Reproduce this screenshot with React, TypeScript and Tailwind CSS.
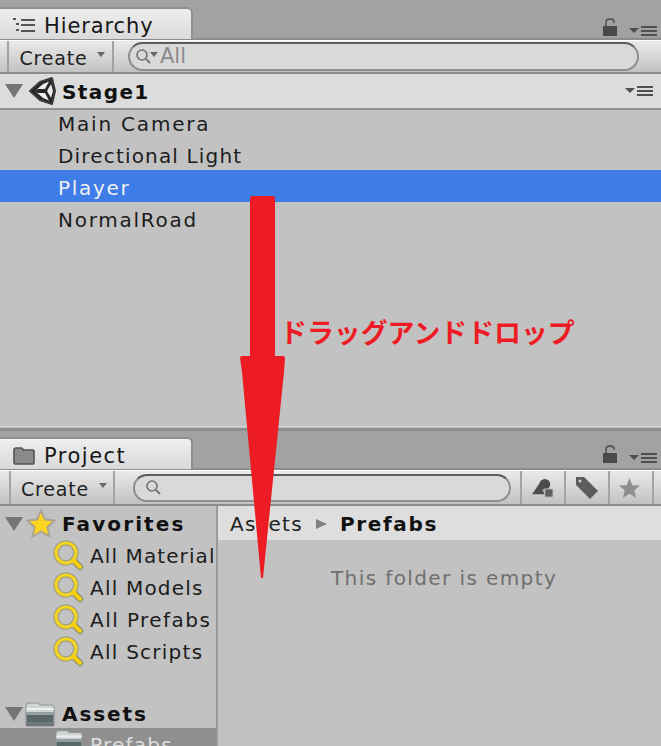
import React from "react";

const font = { fontFamily: '"DejaVu Sans", sans-serif' };

function Lock() {
  return (
    <svg width="14" height="18" viewBox="0 0 14 18">
      <rect x="0" y="8" width="14" height="10" fill="#4a4a4a" />
      <path d="M3 8V4Q3 1 7 1Q11 1 11 3.500V5" fill="none" stroke="#5a5a5a" strokeWidth="1.800" />
    </svg>
  );
}

function Menu() {
  return (
    <svg width="28" height="10" viewBox="0 0 28 10">
      <path d="M0 2H10L5 7Z" fill="#4f4f4f" />
      <rect x="12" y="0" width="16" height="2" fill="#4f4f4f" />
      <rect x="12" y="4" width="16" height="2" fill="#4f4f4f" />
      <rect x="12" y="8" width="16" height="2" fill="#4f4f4f" />
    </svg>
  );
}

function Expand({ className = "" }: { className?: string }) {
  return (
    <svg width="18" height="14" viewBox="0 0 18 14" className={className}>
      <path d="M0 0H18L9 14Z" fill="#757575" />
    </svg>
  );
}

function Magnifier() {
  return (
    <svg width="32" height="32" viewBox="0 0 32 32" className="shrink-0">
      <path d="M20 20L27 27" stroke="#8a8a7a" strokeWidth="6.500" strokeLinecap="round" />
      <circle cx="13" cy="13" r="10" fill="none" stroke="#a09e8a" strokeWidth="5.500" />
      <circle cx="13" cy="13" r="10" fill="none" stroke="#f2d422" strokeWidth="3.200" />
      <path d="M20 20L27 27" stroke="#f5cf10" strokeWidth="4" strokeLinecap="round" />
    </svg>
  );
}

function Folder({ w = 30 }: { w?: number }) {
  return (
    <svg width={w} height="26" viewBox="0 0 30 26" className="shrink-0">
      <path d="M1 5Q1 2 4 2H12Q14 2 15 4H27Q29 4 29 6V24Q29 25 28 25H2Q1 25 1 24Z" fill="#cfd4d4" stroke="#8d9292" />
      <rect x="1.500" y="7" width="27" height="2" fill="#eeeeee" />
      <rect x="1.500" y="11" width="27" height="14" fill="#5b686a" />
      <rect x="1.500" y="11" width="27" height="3" fill="#98a1a2" />
      <rect x="1.500" y="21" width="27" height="4" fill="#6c787a" />
    </svg>
  );
}

function UnityLogo() {
  return (
    <svg width="30" height="30" viewBox="0 0 30 30">
      <path d="M2 15L12 6L24 2L27 15L24 28L12 24Z" fill="#262626" stroke="#3a3a3a" strokeWidth="2" strokeLinejoin="round" />
      <path d="M7 15L15 8L21 5.500L17 13H10Z" fill="#ececec" />
      <path d="M7 15L15 22L21 24.500L17 17H10Z" fill="#ececec" />
      <path d="M19 15L23 8L25 15L23 22Z" fill="#ececec" />
    </svg>
  );
}

function HierarchyIcon() {
  return (
    <svg width="22" height="16" viewBox="0 0 22 16">
      <rect x="0" y="0" width="3" height="2" fill="#555" />
      <rect x="3" y="5" width="3" height="2" fill="#555" />
      <rect x="3" y="11" width="3" height="2" fill="#555" />
      <rect x="8" y="1" width="14" height="2" fill="#555" />
      <rect x="8" y="6" width="14" height="2" fill="#555" />
      <rect x="8" y="12" width="14" height="2" fill="#555" />
    </svg>
  );
}

function ProjectIcon() {
  return (
    <svg width="22" height="18" viewBox="0 0 22 18">
      <path d="M1 3Q1 1 3 1H8Q10 1 10 3H20Q21 3 21 4V16Q21 17 20 17H2Q1 17 1 16Z" fill="#8a8a8a" stroke="#555555" strokeWidth="1.600" />
    </svg>
  );
}

function SearchGlass({ dropdown }: { dropdown?: boolean }) {
  return (
    <svg width="28" height="18" viewBox="0 0 28 18" className="shrink-0">
      <circle cx="7" cy="7" r="5" fill="none" stroke="#747474" strokeWidth="1.600" />
      <path d="M11 11L15 15" stroke="#747474" strokeWidth="2" />
      {dropdown && <path d="M15 4H23L19 9Z" fill="#666" />}
    </svg>
  );
}

function Create({ w }: { w: string }) {
  return (
    <div className={`${w} flex h-full shrink-0 items-center justify-center gap-[10px] border-x-2 border-[#a3a3a3] pt-1 pl-1 text-[19px] leading-none tracking-[0.800px] text-[#222222]`}>
      <span>Create</span>
      <svg width="8" height="5" viewBox="0 0 8 5" className="mb-2">
        <path d="M0 0H8L4 5Z" fill="#666" />
      </svg>
    </div>
  );
}

function Tab({ icon, label, cls }: { icon: React.ReactNode; label: string; cls: string }) {
  return (
    <div className={`flex h-[32px] w-[193px] items-center gap-2 rounded-tr-md border-t-2 border-r-2 border-[#8f8f8f] bg-gradient-to-b from-[#eeeeee] to-[#dadada] pt-1 pl-[13px] text-[21px] leading-none text-[#161616] ${cls}`}>
      {icon}
      <span className="ml-px">{label}</span>
    </div>
  );
}

function Row({ children, cls }: { children: React.ReactNode; cls: string }) {
  return <div className={`flex items-center pl-[58px] text-[20px] leading-none text-[#1c1c1c] ${cls}`}>{children}</div>;
}

function SideRow({ label, cls }: { label: string; cls: string }) {
  return (
    <div className={`flex h-8 items-center whitespace-nowrap pl-[53px] text-[20px] leading-none text-[#1c1c1c] ${cls}`}>
      <Magnifier />
      <span className="ml-[5px]">{label}</span>
    </div>
  );
}

function ToolIcon({ children, cls = "" }: { children: React.ReactNode; cls?: string }) {
  return <div className={`flex h-full w-11 shrink-0 items-center justify-center border-r-2 border-[#a3a3a3] ${cls}`}>{children}</div>;
}

export default function App() {
  return (
    <div className="relative flex h-[746px] w-[661px] flex-col overflow-hidden bg-[#c2c2c2]" style={font}>
      {/* Hierarchy */}
      <div className="flex h-[40px] shrink-0 items-start justify-between border-b-2 border-[#8c8c8c] bg-[#a2a2a2] pt-[7px]">
        <Tab icon={<HierarchyIcon />} label="Hierarchy" cls="tracking-[0.900px]" />
        <div className="mt-[11px] mr-1 flex items-end gap-3">
          <Lock />
          <Menu />
        </div>
      </div>
      <div className="flex h-[34px] shrink-0 items-center border-t border-b-2 border-t-white border-b-[#8c8c8c] bg-gradient-to-b from-[#eaeaea] to-[#c2c2c2] pl-[7px]">
        <Create w="w-[107px]" />
        <div className="ml-[14px] flex h-[29px] w-[511px] items-center rounded-full border-2 border-[#8e8e8e] border-t-[#5c5c5c] bg-[#d9d9d9] pl-[5px] text-[21px] leading-none text-[#8a8a8a]">
          <SearchGlass dropdown />
          <span className="-ml-[3px]">All</span>
        </div>
      </div>
      <div className="flex h-9 shrink-0 items-center border-b-2 border-[#929292] bg-[#dcdcdc] pl-[5px]">
        <Expand />
        <div className="ml-[5px]"><UnityLogo /></div>
        <span className="ml-1 pt-[2px] text-[20px] leading-none font-bold tracking-[1.400px] text-[#111]">Stage1</span>
        <div className="mr-2 ml-auto"><Menu /></div>
      </div>
      <div className="flex h-[318px] shrink-0 flex-col">
        <Row cls="h-[28px] tracking-[1.800px]">Main Camera</Row>
        <Row cls="h-8 pt-1 tracking-[1.170px]">Directional Light</Row>
        <Row cls="h-8 bg-[#3e7de7] pt-1 tracking-[1.700px] text-[#f0f0f0]">Player</Row>
        <Row cls="h-8 pt-1 tracking-[1.750px]">NormalRoad</Row>
        <div className="mt-auto mb-[1px] h-[1px] bg-[#d2d2d2]" />
      </div>

      {/* Project */}
      <div className="flex h-[42px] shrink-0 items-start justify-between border-t-[3px] border-b-2 border-t-[#8c8c8c] border-b-[#8c8c8c] bg-[#a2a2a2] pt-[6px]">
        <Tab icon={<ProjectIcon />} label="Project" cls="tracking-[1.500px]" />
        <div className="mt-[8px] mr-1 flex items-end gap-3">
          <Lock />
          <Menu />
        </div>
      </div>
      <div className="flex h-[36px] shrink-0 items-center border-t border-b-2 border-t-white border-b-[#8c8c8c] bg-gradient-to-b from-[#eaeaea] to-[#c2c2c2] pl-[9px]">
        <Create w="w-[106px]" />
        <div className="ml-[18px] flex h-[28px] w-[378px] items-center rounded-full border-2 border-[#8e8e8e] border-t-[#5c5c5c] bg-[#d9d9d9] pl-[10px]">
          <SearchGlass />
        </div>
        <div className="ml-[9px] flex h-full items-center border-l-2 border-[#a3a3a3]">
          <ToolIcon>
            <svg width="22" height="20" viewBox="0 0 24 22">
              <circle cx="14" cy="7" r="6" fill="#4c4c4c" />
              <path d="M0 18L8 6L14 18Z" fill="#4c4c4c" />
              <rect x="14" y="12" width="9" height="9" fill="#5f5f5f" stroke="#c8c8c8" />
            </svg>
          </ToolIcon>
          <ToolIcon>
            <svg width="24" height="24" viewBox="0 0 24 24">
              <path d="M1 1H9L23 15L15 23L1 9Z" fill="#5c5c5c" />
              <circle cx="5" cy="5" r="1.500" fill="#d0d0d0" />
            </svg>
          </ToolIcon>
          <ToolIcon cls="pr-1">
            <svg width="21" height="20" viewBox="0 0 22 21">
              <path d="M11 0L14 7.500L22 8L16 13L18 21L11 16.500L4 21L6 13L0 8L8 7.500Z" fill="#8f8f8f" />
            </svg>
          </ToolIcon>
        </div>
      </div>
      <div className="flex min-h-0 flex-1">
        <div className="w-[218px] shrink-0 overflow-hidden border-r-2 border-[#9a9a9a] pt-[2px]">
          <div className="flex h-8 items-center pl-[5px] text-[20px] leading-none font-bold tracking-[2.100px] text-[#111]">
            <Expand />
            <svg width="30" height="30" viewBox="0 0 30 30" className="ml-[3px]">
              <path d="M15 1.500L19 10.500L28.500 11.500L21.500 18L23.500 27.500L15 22.500L6.500 27.500L8.500 18L1.500 11.500L11 10.500Z" fill="#ffd61f" stroke="#a9a590" strokeWidth="2" />
            </svg>
            <span className="ml-[6px]">Favorites</span>
          </div>
          <SideRow label="All Material" cls="tracking-[1.100px]" />
          <SideRow label="All Models" cls="tracking-[1.200px]" />
          <SideRow label="All Prefabs" cls="tracking-[1.450px]" />
          <SideRow label="All Scripts" cls="tracking-[1.250px]" />
          <div className="mt-[30px] flex h-[30px] items-center pt-[1px] pl-[5px] text-[20px] leading-none font-bold tracking-[1.900px] text-[#111]">
            <Expand />
            <div className="ml-[2px] flex"><Folder /></div>
            <span className="ml-[7px]">Assets</span>
          </div>
          <div className="flex h-8 items-start bg-[#8f8f8f] pl-[55px] text-[20px] leading-none tracking-[1.250px] text-[#dedede]">
            <Folder w={28} />
            <span className="mt-[7px] ml-[7px]">Prefabs</span>
          </div>
        </div>
        <div className="min-w-0 flex-1">
          <div className="flex h-[34px] items-center bg-[#dedede] pt-[2px] pl-3 text-[20px] leading-none tracking-[1.300px] text-[#222]">
            <span>Assets</span>
            <svg width="11" height="10" viewBox="0 0 11 10" className="mr-[13px] ml-[13px]">
              <path d="M0 0L11 5L0 10Z" fill="#808080" />
            </svg>
            <span className="font-bold tracking-[1.650px] text-[#111]">Prefabs</span>
          </div>
          <div className="pt-[28px] pl-[113px] text-[20px] leading-none tracking-[1.400px] whitespace-nowrap text-[#6f6f6f]">This folder is empty</div>
        </div>
      </div>

      {/* Annotation overlay */}
      <svg width="661" height="746" viewBox="0 0 661 746" className="absolute top-0 left-0">
        <path d="M252 196H273Q275 196 275 198V356H283Q285 356 285 358L284 372L263 578H261L242 372L240 358Q240 356 242 356H250V198Q250 196 252 196Z" fill="#ed1c24" />
      </svg>
      <div
        className="absolute top-[314px] left-[280px] text-[26.900px] leading-[36px] font-bold whitespace-nowrap text-[#ed1c24]"
        style={{ fontFamily: '"Noto Sans CJK JP", sans-serif' }}
      >
        ドラッグアンドドロップ
      </div>
    </div>
  );
}
